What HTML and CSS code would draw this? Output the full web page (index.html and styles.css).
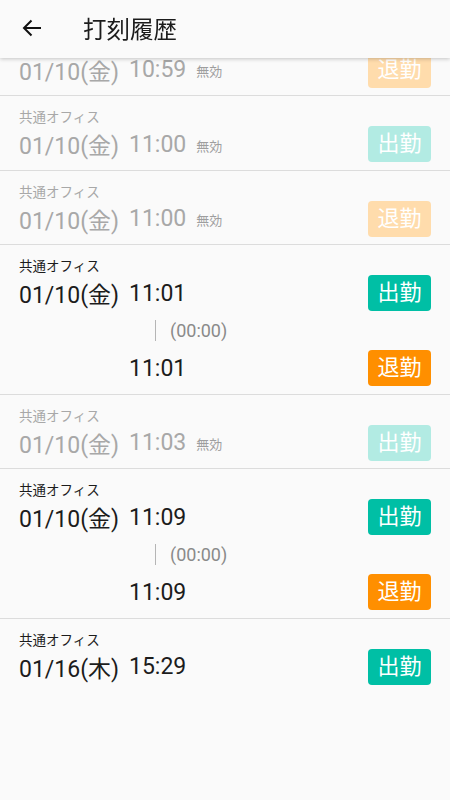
FILE: index.html
```html
<!DOCTYPE html>
<html lang="ja">
<head>
    <meta charset="UTF-8">
    <meta name="viewport" content="width=device-width, initial-scale=1.0">
    <title>打刻履歴</title>
    <link rel="stylesheet" href="styles.css">
</head>
<body>
    <div class="app-bar">
        <div class="back-button">
            <svg width="24" height="24" viewBox="0 0 24 24">
                <path d="M21 12H4M11.5 4.5L4 12l7.5 7.5" fill="none" stroke="#111" stroke-width="2"/>
            </svg>
        </div>
        <div class="app-title">打刻履歴</div>
    </div>

    <div class="history-list">
        <div class="history-row disabled">
            <div class="place">共通オフィス</div>
            <div class="line">
                <span class="date">01/10(金)</span>
                <span class="time">10:59</span>
                <span class="invalid">無効</span>
                <span class="badge leave">退勤</span>
            </div>
        </div>

        <div class="history-row disabled">
            <div class="place">共通オフィス</div>
            <div class="line">
                <span class="date">01/10(金)</span>
                <span class="time">11:00</span>
                <span class="invalid">無効</span>
                <span class="badge arrive">出勤</span>
            </div>
        </div>

        <div class="history-row disabled">
            <div class="place">共通オフィス</div>
            <div class="line">
                <span class="date">01/10(金)</span>
                <span class="time">11:00</span>
                <span class="invalid">無効</span>
                <span class="badge leave">退勤</span>
            </div>
        </div>

        <div class="history-row">
            <div class="place">共通オフィス</div>
            <div class="line">
                <span class="date">01/10(金)</span>
                <span class="time">11:01</span>
                <span class="badge arrive">出勤</span>
            </div>
            <div class="duration">
                <span class="duration-bar"></span>
                <span class="duration-text">(00:00)</span>
            </div>
            <div class="line">
                <span class="date"></span>
                <span class="time">11:01</span>
                <span class="badge leave">退勤</span>
            </div>
        </div>

        <div class="history-row disabled">
            <div class="place">共通オフィス</div>
            <div class="line">
                <span class="date">01/10(金)</span>
                <span class="time">11:03</span>
                <span class="invalid">無効</span>
                <span class="badge arrive">出勤</span>
            </div>
        </div>

        <div class="history-row">
            <div class="place">共通オフィス</div>
            <div class="line">
                <span class="date">01/10(金)</span>
                <span class="time">11:09</span>
                <span class="badge arrive">出勤</span>
            </div>
            <div class="duration">
                <span class="duration-bar"></span>
                <span class="duration-text">(00:00)</span>
            </div>
            <div class="line">
                <span class="date"></span>
                <span class="time">11:09</span>
                <span class="badge leave">退勤</span>
            </div>
        </div>

        <div class="history-row last">
            <div class="place">共通オフィス</div>
            <div class="line">
                <span class="date">01/16(木)</span>
                <span class="time">15:29</span>
                <span class="badge arrive">出勤</span>
            </div>
        </div>
    </div>
</body>
</html>
```

FILE: styles.css
```css
body {
    font-family: Roboto, "Noto Sans CJK JP", sans-serif;
    margin: 0;
    padding: 0;
    background: #fafafa;
    color: #1c1c1c;
    height: 800px;
    overflow: hidden;
}

/* app bar sits over the scrolled list */
.app-bar {
    position: fixed;
    top: 0;
    left: 0;
    right: 0;
    height: 58px;
    background: #fafafa;
    box-shadow: 0 1px 4px rgba(0, 0, 0, 0.22);
    display: flex;
    align-items: center;
    z-index: 10;
}

.back-button {
    width: 24px;
    height: 24px;
    margin-left: 20px;
    margin-top: -2px;
}

.back-button svg {
    display: block;
}

.app-title {
    margin-left: 39px;
    margin-top: -2px;
    font-size: 23.5px;
    color: #1c1c1c;
}

.history-list {
    margin-top: 21.5px;
}

.history-row {
    padding: 12px 19px 7.67px 19px;
    border-bottom: 1px solid #dcdcdc;
}

.history-row.last {
    border-bottom: none;
}

.place {
    height: 18px;
    line-height: 18px;
    font-size: 13.5px;
}

.line {
    display: flex;
    align-items: center;
    height: 36px;
}

.date {
    width: 110px;
    font-size: 23px;
    flex-shrink: 0;
}

.time {
    font-size: 23px;
}

.invalid {
    font-size: 13px;
    margin-left: 10px;
    margin-top: 2px;
    color: #9e9e9e;
}

.badge {
    margin-left: auto;
    width: 63px;
    height: 36px;
    line-height: 36px;
    border-radius: 4px;
    text-align: center;
    font-size: 22px;
    color: white;
}

.badge.arrive {
    background: #00bfa5;
}

.badge.leave {
    background: #ff8f00;
}

.duration {
    display: flex;
    align-items: center;
    height: 38.67px;
    padding-left: 136px;
}

.duration-bar {
    width: 1px;
    height: 21px;
    background: #b5b5b5;
}

.duration-text {
    margin-left: 14px;
    font-size: 18px;
    color: #8a8a8a;
}

.history-row.disabled .place,
.history-row.disabled .date,
.history-row.disabled .time {
    color: #a8a8a8;
}

.history-row.disabled .badge.arrive {
    background: #b2ebe3;
}

.history-row.disabled .badge.leave {
    background: #ffdcac;
}
```
